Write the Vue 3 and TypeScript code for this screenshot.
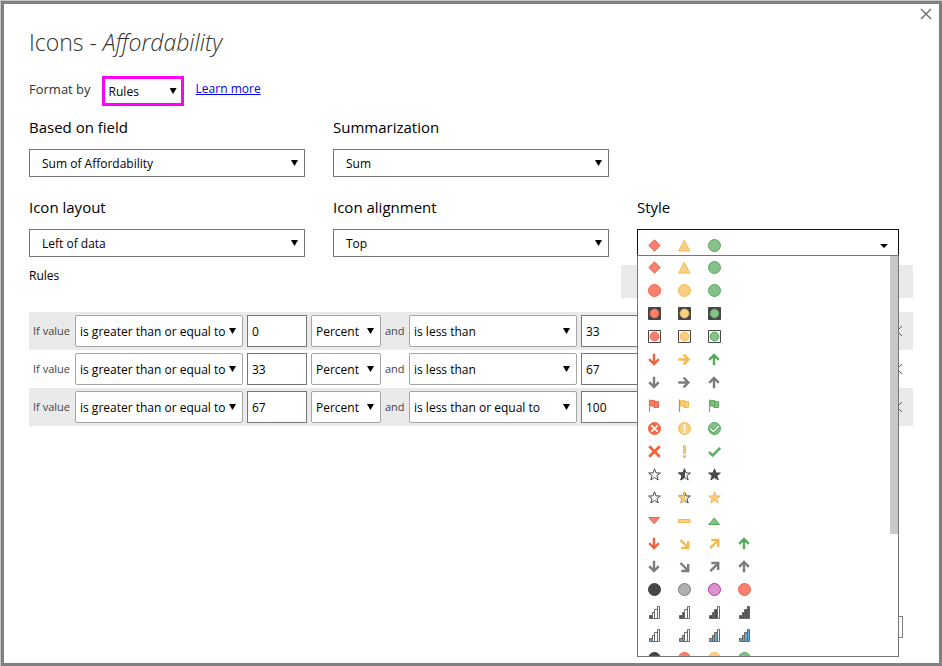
<script setup lang="ts">
import { ref } from 'vue'

interface Shape {
  d: string
  fill?: string
  stroke?: string
  width?: number
}
type Glyph = Shape[]
interface Tone {
  fill: string
  line: string
}
interface Rule {
  from: string
  low: string
  unit: string
  to: string
  high: string
}

const red: Tone = { fill: '#fa8072', line: '#f2623c' }
const amber: Tone = { fill: '#f9cf85', line: '#f5b84f' }
const green: Tone = { fill: '#86c08b', line: '#55aa5a' }
const dark: Tone = { fill: '#474747', line: '#3c3c3c' }
const gray: Tone = { fill: '#b0b0b0', line: '#7c7c7c' }
const pink: Tone = { fill: '#dd92cf', line: '#b82fab' }

const disc = (r: number) =>
  `M${6.5 - r} 6.5a${r} ${r} 0 1 0 ${2 * r} 0a${r} ${r} 0 1 0 ${-2 * r} 0z`
const starPath =
  'M6.5 .8L8 4.9L12.4 5L8.9 7.7L10.2 12L6.5 9.4L2.8 12L4.1 7.7L.6 5L5 4.9z'

const solid = (d: string, t: Tone): Glyph => [{ d, fill: t.fill, stroke: t.line }]
const circle = (t: Tone) => solid(disc(6), t)
const diamond = (t: Tone) => solid('M6.5 .8L12.2 6.5L6.5 12.2L.8 6.5z', t)
const triangle = (t: Tone) => solid('M6.3 1.3L11.8 12H.8z', t)
const boxed = (t: Tone, back: string): Glyph => [
  { d: 'M.5 .5H12.5V12.5H.5z', fill: back, stroke: '#474747' },
  { d: disc(4.4), fill: t.fill, stroke: t.line },
]
const stroke = (d: string, color: string, width = 2.4): Glyph => [{ d, stroke: color, width }]
const down = (c: string) => stroke('M6 .8V11M1.2 6.2L6 11L10.8 6.2', c)
const up = (c: string) => stroke('M6 12.2V2M1.2 6.8L6 2L10.8 6.8', c)
const right = (c: string) => stroke('M.3 6.5H10.3M5.6 1.7L10.4 6.5L5.6 11.3', c)
const downRight = (c: string) => stroke('M2.5 3L10 10.5M10.2 4V11H3.3', c)
const upRight = (c: string) => stroke('M2.3 11.2L10 3.5M3.3 3H10.2V10', c)
const flag = (t: Tone): Glyph => [
  { d: 'M1.5 .5V13', stroke: '#999999', width: 1.3 },
  { d: 'M5.5 2.5H10.5V8.5H6V7', fill: t.fill, stroke: t.line },
  { d: 'M2.5 1.5H6.5V7H2.5z', fill: t.fill, stroke: t.line },
]
const star = (fill: string, line: string): Glyph => [{ d: starPath, fill, stroke: line }]
const halfStar = (fill: string, line: string): Glyph => [
  { d: starPath, fill: '#ffffff', stroke: '#4a4a4a' },
  { d: 'M6.5 .8V9.4L2.8 12L4.1 7.7L.6 5L5 4.9z', fill, stroke: line },
]
const edges = [1.5, 4.5, 6.5, 9.5, 11.5]
const bars = (count: number, fill: string): Glyph =>
  [0, 1, 2, 3].map((i) => ({
    d: `M${edges[i]} 12.5V${9.5 - i * 3}H${edges[i + 1]}V12.5z`,
    fill: i < count ? fill : '#ffffff',
    stroke: '#686868',
  }))

const sets: Glyph[][] = [
  [diamond(red), triangle(amber), circle(green)],
  [circle(red), circle(amber), circle(green)],
  [boxed(red, '#474747'), boxed(amber, '#474747'), boxed(green, '#474747')],
  [boxed(red, '#ffffff'), boxed(amber, '#ffffff'), boxed(green, '#ffffff')],
  [down(red.line), right(amber.line), up(green.line)],
  [down('#7c7c7c'), right('#7c7c7c'), up('#7c7c7c')],
  [flag(red), flag(amber), flag(green)],
  [
    [
      { d: disc(6), fill: '#f4694a', stroke: red.line },
      { d: 'M3.3 3.3L9.7 9.7M9.7 3.3L3.3 9.7', stroke: '#ffffff', width: 1.8 },
    ],
    [...circle(amber), { d: 'M6.5 2.2V8.2M6.5 9.2V11', stroke: '#ffffff', width: 1.7 }],
    [
      ...circle(green),
      { d: 'M2.4 6.8L5.4 9.6L11 3.8', stroke: '#55aa5a', width: 3.4 },
      { d: 'M2.4 6.8L5.4 9.6L11 3.8', stroke: '#ffffff', width: 1.4 },
    ],
  ],
  [
    stroke('M1.2 1.2L11.8 11.8M11.8 1.2L1.2 11.8', red.line, 2.7),
    [
      { d: 'M5.5 .5H7.5V8.5H5.5z', fill: amber.fill, stroke: amber.line },
      { d: 'M5.5 10.5H7.5V12.5H5.5z', fill: amber.fill, stroke: amber.line },
    ],
    stroke('M1 7L4.7 10.4L12.2 3', '#5fb064', 2.6),
  ],
  [star('#ffffff', '#4a4a4a'), halfStar('#4a4a4a', '#4a4a4a'), star('#4a4a4a', '#4a4a4a')],
  [star('#ffffff', '#4a4a4a'), halfStar(amber.fill, amber.line), star(amber.fill, amber.line)],
  [
    solid('M.8 3.5H11.5L6.2 9.8z', red),
    solid('M.5 5.5H12V8.5H.5z', amber),
    solid('M.8 10.5H11.5L6.2 4z', green),
  ],
  [down(red.line), downRight(amber.line), upRight(amber.line), up(green.line)],
  [down('#7c7c7c'), downRight('#7c7c7c'), upRight('#7c7c7c'), up('#7c7c7c')],
  [circle(dark), circle(gray), circle(pink), circle(red)],
  [1, 2, 3, 4].map((n) => bars(n, '#4f4f4f')),
  [1, 2, 3, 4].map((n) => bars(n, '#63a8dc')),
  [circle(dark), circle(red), circle(amber), circle(green)],
]

const chosen = ref(0)
const format = ref('Rules')
const fields = [
  { id: 'field', label: 'Based on field', value: 'Sum of Affordability' },
  { id: 'summary', label: 'Summarization', value: 'Sum' },
]
const placement = [
  { id: 'layout', label: 'Icon layout', value: 'Left of data' },
  { id: 'align', label: 'Icon alignment', value: 'Top' },
]
const lowTests = ['is greater than or equal to', 'is greater than']
const highTests = ['is less than', 'is less than or equal to']
const rules = ref<Rule[]>([
  { from: lowTests[0], low: '0', unit: 'Percent', to: highTests[0], high: '33' },
  { from: lowTests[0], low: '33', unit: 'Percent', to: highTests[0], high: '67' },
  { from: lowTests[0], low: '67', unit: 'Percent', to: highTests[1], high: '100' },
])
</script>

<template>
  <div class="page">
    <main class="dialog">
      <button class="close" type="button" aria-label="Close">
        <svg viewBox="0 0 12 12" width="12" height="12"><path d="M1 1L11 11M11 1L1 11" /></svg>
      </button>

      <h1>Icons - <em>Affordability</em></h1>

      <div class="format">
        <label for="format">Format by</label>
        <div class="pick marked">
          <select id="format" v-model="format">
            <option>Rules</option>
          </select>
        </div>
        <a href="#">Learn more</a>
      </div>

      <div class="grid">
        <div v-for="f in fields" :key="f.id" class="field">
          <label :for="f.id">{{ f.label }}</label>
          <div class="pick">
            <select :id="f.id"><option>{{ f.value }}</option></select>
          </div>
        </div>
      </div>

      <div class="grid second">
        <div v-for="f in placement" :key="f.id" class="field">
          <label :for="f.id">{{ f.label }}</label>
          <div class="pick">
            <select :id="f.id"><option>{{ f.value }}</option></select>
          </div>
        </div>
        <div class="field">
          <label id="style-label" for="style">Style</label>
          <div class="style-pick">
            <button id="style" class="current" type="button" aria-haspopup="listbox" aria-expanded="true">
              <svg v-for="(g, i) in sets[chosen]" :key="i" class="glyph" viewBox="0 0 13 13">
                <path v-for="(s, j) in g" :key="j" :d="s.d" :fill="s.fill ?? 'none'" :stroke="s.stroke" :stroke-width="s.width ?? 1" />
              </svg>
              <svg class="caret" viewBox="0 0 8 4" width="8" height="4"><path d="M0 0H8L4 4z" /></svg>
            </button>
            <div class="popup">
              <ul role="listbox" aria-labelledby="style-label">
                <li v-for="(set, n) in sets" :key="n" role="option" :aria-selected="n === chosen" @click="chosen = n">
                  <svg v-for="(g, i) in set" :key="i" class="glyph" viewBox="0 0 13 13">
                    <path v-for="(s, j) in g" :key="j" :d="s.d" :fill="s.fill ?? 'none'" :stroke="s.stroke" :stroke-width="s.width ?? 1" />
                  </svg>
                </li>
              </ul>
              <span class="thumb"></span>
            </div>
          </div>
        </div>
      </div>

      <section>
        <div class="head">
          <h2>Rules</h2>
          <div class="tools"></div>
        </div>
        <div v-for="(r, i) in rules" :key="i" class="rule">
          <label :for="'from' + i" class="if">If value</label>
          <div class="pick wide">
            <select :id="'from' + i" v-model="r.from">
              <option v-for="t in lowTests" :key="t">{{ t }}</option>
            </select>
          </div>
          <input v-model="r.low" type="text" aria-label="Lower limit" />
          <div class="pick unit">
            <select v-model="r.unit" aria-label="Unit"><option>Percent</option></select>
          </div>
          <label :for="'to' + i" class="and">and</label>
          <div class="pick wide">
            <select :id="'to' + i" v-model="r.to">
              <option v-for="t in highTests" :key="t">{{ t }}</option>
            </select>
          </div>
          <input v-model="r.high" type="text" aria-label="Upper limit" />
          <button class="remove" type="button" aria-label="Remove rule">
            <svg viewBox="0 0 10 10" width="10" height="10"><path d="M0 0L10 10M10 0L0 10" /></svg>
          </button>
        </div>
      </section>

      <footer>
        <button class="action" type="button" aria-label="Cancel"></button>
      </footer>
    </main>
  </div>
</template>

<style>
body {
  background: #ffffff;
}
</style>

<style scoped>
* {
  box-sizing: border-box;
}
.page {
  display: flex;
  min-height: 100vh;
  padding: 1px 0 0 1px;
  background: #c4c6c4;
  font-family: 'Open Sans', 'Noto Sans', sans-serif;
  font-size: 12px;
  color: #000000;
}
.dialog {
  position: relative;
  display: flex;
  flex: 1;
  flex-direction: column;
  padding: 22px 26px 25px 25px;
  border: 3px solid #808080;
  background: #ffffff;
}
button,
select,
input {
  margin: 0;
  font: inherit;
  color: inherit;
}
.close {
  position: absolute;
  top: 4px;
  right: 7px;
  display: flex;
  padding: 0;
  border: 0;
  background: none;
}
.close path {
  stroke: #6a6a6a;
  stroke-width: 1.4;
}
h1 {
  margin: 0 0 18px;
  font-size: 23px;
  font-weight: 300;
  line-height: 32px;
  color: #333333;
}
.format {
  display: flex;
  align-items: flex-start;
  gap: 11px;
  margin-bottom: 10px;
  font-size: 13px;
  line-height: 26px;
  color: #333333;
}
.format a {
  margin-left: 1px;
  font-size: 12px;
  color: #0000ee;
}
.grid {
  display: grid;
  grid-template-columns: 276fr 276fr 262fr;
  gap: 28px;
  padding-right: 14px;
}
.second {
  margin-top: 19px;
}
.field {
  display: flex;
  flex-direction: column;
  gap: 11px;
  min-width: 0;
}
.field > label {
  font-size: 15px;
  line-height: 22px;
}
.pick {
  position: relative;
  height: 28px;
}
.pick::after {
  content: '';
  position: absolute;
  top: 50%;
  right: 7px;
  width: 7px;
  height: 6px;
  margin-top: -3px;
  background: #000000;
  clip-path: polygon(0 0, 100% 0, 50% 100%);
  pointer-events: none;
}
select {
  display: block;
  width: 100%;
  height: 100%;
  padding: 0 18px 0 12px;
  border: 1px solid #767676;
  border-radius: 0;
  background: #ffffff;
  appearance: none;
  outline: 0;
}
.marked {
  width: 82px;
  height: 30px;
  font-size: 12px;
  color: #000000;
}
.marked select {
  padding: 0 14px 0 4px;
  border: 3px solid #ff00ff;
}
.style-pick {
  position: relative;
}
.current {
  display: flex;
  align-items: center;
  gap: 17px;
  width: 100%;
  height: 33px;
  padding: 0 10px;
  border: 1px solid #111111;
  background: #ffffff;
}
.glyph {
  flex: none;
  width: 13px;
  height: 13px;
}
.caret {
  margin-left: auto;
}
.popup {
  position: absolute;
  z-index: 2;
  top: 26px;
  left: 0;
  right: 0;
  border: 1px solid #767676;
  background: #ffffff;
}
ul {
  max-height: 400px;
  margin: 0;
  padding: 0;
  overflow-y: auto;
  list-style: none;
  scrollbar-width: none;
}
li {
  display: flex;
  align-items: center;
  gap: 17px;
  height: 23px;
  padding: 0 10px;
}
.thumb {
  position: absolute;
  top: 0;
  right: 0;
  width: 8px;
  height: 278px;
  background: #c8c8c8;
}
.head {
  display: flex;
  justify-content: space-between;
  margin: 3px 0 14px;
}
h2 {
  margin: 0;
  font-size: 12px;
  font-weight: 400;
  line-height: 22px;
}
.tools {
  width: 33%;
  height: 33px;
  background: #eaeaea;
}
.rule {
  display: flex;
  align-items: center;
  gap: 4px;
  height: 38px;
  padding: 0 4px;
}
.rule:nth-child(even) {
  background: #eaeaea;
}
.rule label {
  flex: none;
  padding-bottom: 2px;
  font-size: 11px;
  white-space: nowrap;
  color: #444444;
}
.if {
  width: 38px;
}
.and {
  width: 20px;
}
.rule .pick,
.rule input {
  height: 32px;
}
.rule select {
  padding: 0 14px 0 4px;
  border-color: #a6a6a6;
  border-radius: 2px;
}
.wide {
  flex: 0 1 168px;
}
.unit {
  flex: 0 1 70px;
}
.rule input {
  flex: 0 1 60px;
  min-width: 0;
  padding: 0 4px;
  border: 1px solid #767676;
  background: #ffffff;
}
.remove {
  display: flex;
  margin-left: auto;
  padding: 0 7px;
  border: 0;
  background: none;
}
.remove path {
  stroke: #55506a;
}
footer {
  display: flex;
  justify-content: flex-end;
  margin-top: auto;
  padding-right: 10px;
}
.action {
  width: 76px;
  height: 22px;
  border: 1px solid #808080;
  background: #ffffff;
}
</style>
